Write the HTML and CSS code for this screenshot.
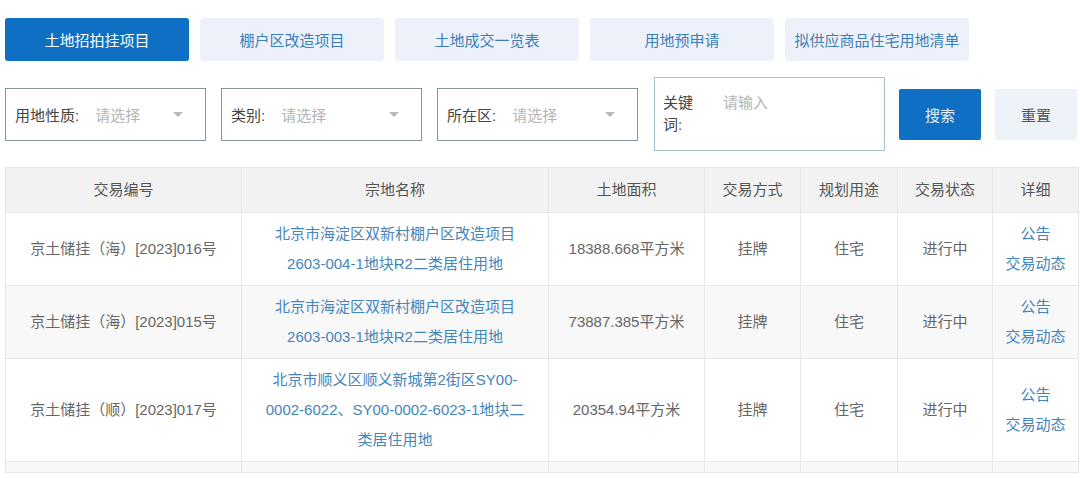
FILE: index.html
```html
<!DOCTYPE html>
<html lang="zh-CN">
<head>
<meta charset="utf-8">
<title>土地招拍挂项目</title>
<link rel="stylesheet" href="styles.css">
</head>
<body>
<div class="page">
  <nav class="tabs">
    <a class="tab active">土地招拍挂项目</a>
    <a class="tab">棚户区改造项目</a>
    <a class="tab">土地成交一览表</a>
    <a class="tab">用地预申请</a>
    <a class="tab">拟供应商品住宅用地清单</a>
  </nav>

  <div class="filters">
    <div class="select s1">
      <span class="label">用地性质:</span>
      <span class="ph">请选择</span>
      <span class="caret"></span>
    </div>
    <div class="select s2">
      <span class="label">类别:</span>
      <span class="ph">请选择</span>
      <span class="caret"></span>
    </div>
    <div class="select s3">
      <span class="label">所在区:</span>
      <span class="ph">请选择</span>
      <span class="caret"></span>
    </div>
    <div class="keyword">
      <span class="klabel">关键词:</span>
      <span class="ph">请输入</span>
    </div>
    <button class="btn primary">搜索</button>
    <button class="btn plain">重置</button>
  </div>

  <table class="grid">
    <colgroup>
      <col style="width:236px">
      <col style="width:307px">
      <col style="width:156px">
      <col style="width:96px">
      <col style="width:97px">
      <col style="width:95px">
      <col style="width:86px">
    </colgroup>
    <thead>
      <tr>
        <th>交易编号</th>
        <th>宗地名称</th>
        <th>土地面积</th>
        <th>交易方式</th>
        <th>规划用途</th>
        <th>交易状态</th>
        <th>详细</th>
      </tr>
    </thead>
    <tbody>
      <tr>
        <td>京土储挂（海）[2023]016号</td>
        <td class="link">北京市海淀区双新村棚户区改造项目<br>2603-004-1地块R2二类居住用地</td>
        <td>18388.668平方米</td>
        <td>挂牌</td>
        <td>住宅</td>
        <td>进行中</td>
        <td class="link">公告<br>交易动态</td>
      </tr>
      <tr>
        <td>京土储挂（海）[2023]015号</td>
        <td class="link">北京市海淀区双新村棚户区改造项目<br>2603-003-1地块R2二类居住用地</td>
        <td>73887.385平方米</td>
        <td>挂牌</td>
        <td>住宅</td>
        <td>进行中</td>
        <td class="link">公告<br>交易动态</td>
      </tr>
      <tr>
        <td>京土储挂（顺）[2023]017号</td>
        <td class="link">北京市顺义区顺义新城第2街区SY00-<br>0002-6022、SY00-0002-6023-1地块二<br>类居住用地</td>
        <td>20354.94平方米</td>
        <td>挂牌</td>
        <td>住宅</td>
        <td>进行中</td>
        <td class="link">公告<br>交易动态</td>
      </tr>
      <tr class="stub">
        <td></td><td></td><td></td><td></td><td></td><td></td><td></td>
      </tr>
    </tbody>
  </table>
</div>
</body>
</html>
```

FILE: styles.css
```css
* { box-sizing: border-box; }

html, body {
  margin: 0;
  padding: 0;
  background: #ffffff;
}

body {
  font-family: "Liberation Sans", "Noto Sans CJK SC", sans-serif;
  font-size: 15px;
  color: #555;
  overflow: hidden;
}

.page {
  padding: 18px 0 0 5px;
  width: 1080px;
}

/* tabs */
.tabs {
  display: flex;
  gap: 11px;
  height: 43px;
}

.tab {
  width: 184px;
  height: 43px;
  display: flex;
  align-items: center;
  justify-content: center;
  border-radius: 3px;
  background: #edf2fa;
  color: #3d7db8;
  font-size: 15px;
}

.tab.active {
  background: #0f6fc3;
  color: #ffffff;
}

/* filters */
.filters {
  display: flex;
  align-items: center;
  margin-top: 16px;
  height: 74px;
}

.select {
  width: 201px;
  height: 53px;
  border: 1px solid #85959e;
  display: flex;
  align-items: center;
  padding: 0 22px 0 9px;
  margin-right: 15px;
  background: #fff;
}

.select .label {
  color: #444;
  font-size: 15px;
  margin-right: 16px;
  white-space: nowrap;
}

.ph {
  color: #b4b4b4;
  font-size: 15px;
  white-space: nowrap;
}

.caret {
  margin-left: auto;
  width: 0;
  height: 0;
  border-left: 5px solid transparent;
  border-right: 5px solid transparent;
  border-top: 5px solid #b8b8b8;
}

.keyword {
  width: 231px;
  height: 74px;
  border: 1px solid #a6c1d0;
  display: flex;
  align-items: flex-start;
  padding: 14px 0 0 8px;
  margin-right: 14px;
  margin-left: 1px;
}

.keyword .klabel {
  width: 32px;
  line-height: 22px;
  color: #444;
  font-size: 15px;
  margin-right: 28px;
}

.keyword .ph {
  line-height: 22px;
}

.btn {
  height: 51px;
  width: 82px;
  border: none;
  border-radius: 2px;
  font-family: inherit;
  font-size: 15px;
  padding: 0;
}

.btn.primary {
  background: #0f6fc3;
  color: #e8f1fb;
  margin-right: 14px;
}

.btn.plain {
  background: #edf1f8;
  color: #555;
}

/* table */
.grid {
  margin-top: 16px;
  border-collapse: collapse;
  table-layout: fixed;
  width: 1073px;
}

.grid th,
.grid td {
  border: 1px solid #e7e7e7;
  text-align: center;
  vertical-align: middle;
  font-size: 15px;
  line-height: 30px;
  padding: 6px 4px;
  font-weight: normal;
  color: #666;
}

.grid th {
  background: #f2f2f2;
  height: 45px;
  color: #555;
}

.grid tbody tr:nth-child(even) td {
  background: #f8f8f8;
}

.grid td.link {
  color: #4585ba;
}

.grid tr.stub td {
  height: 11px;
  padding: 0;
  line-height: 0;
}
```
